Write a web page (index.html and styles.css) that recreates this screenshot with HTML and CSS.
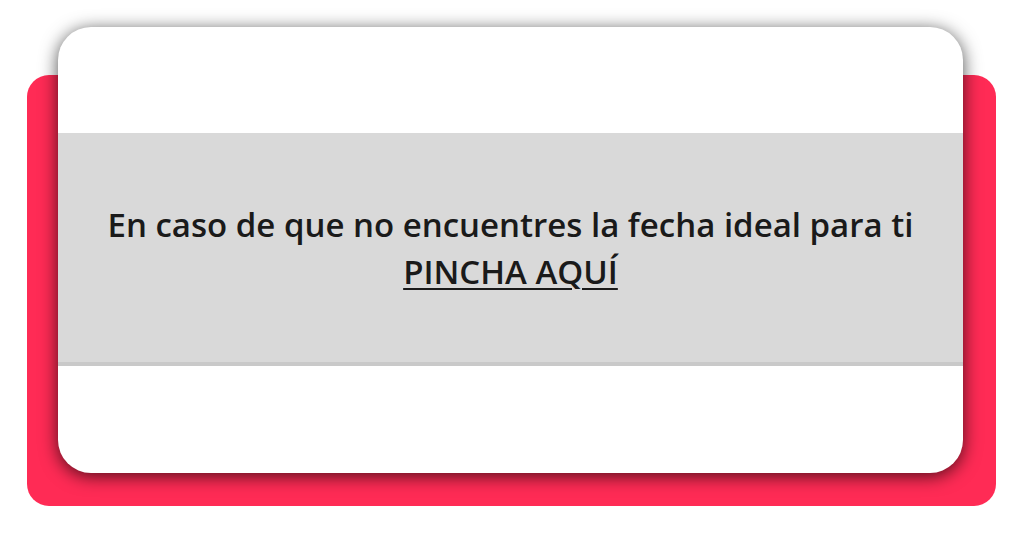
FILE: index.html
```html
<!DOCTYPE html>
<html lang="es">
<head>
<meta charset="utf-8">
<link rel="stylesheet" href="styles.css">
</head>
<body>
<div class="stage">
  <div class="backdrop">
    <div class="card">
      <div class="card-top"></div>
      <div class="band">
        <p class="msg">En caso de que no encuentres la fecha ideal para ti<br><a class="link" href="#">PINCHA AQUÍ</a></p>
      </div>
      <div class="card-bottom"></div>
    </div>
  </div>
</div>
</body>
</html>
```
FILE: styles.css
```css
html, body {
  margin: 0;
  padding: 0;
  background: #ffffff;
}
.stage {
  width: 1024px;
  height: 536px;
  padding-top: 75px;
  box-sizing: border-box;
}
.backdrop {
  margin-left: 27px;
  width: 969px;
  box-sizing: border-box;
  background: #ff2b55;
  border-radius: 22px;
  padding: 0 33px 33px 31px;
  display: flex;
  flex-direction: column;
}
.card {
  margin-top: -48px;
  height: 446px;
  background: #ffffff;
  border-radius: 33px;
  overflow: hidden;
  box-shadow: 0 3px 18px rgba(0, 0, 0, 0.7);
  display: flex;
  flex-direction: column;
}
.card-top {
  height: 106px;
}
.band {
  height: 229px;
  background: #d9d9d9;
  border-bottom: 4px solid #c9c9c9;
  display: flex;
  align-items: center;
  justify-content: center;
}
.card-bottom {
  flex: 1;
}
.msg {
  margin: 0;
  text-align: center;
  font-family: "Open Sans", sans-serif;
  font-size: 33px;
  font-weight: 600;
  line-height: 47px;
  color: #1a1a1a;
}
.link {
  color: #1a1a1a;
  text-decoration: underline;
  text-underline-offset: 4px;
  text-decoration-thickness: 2px;
}
```
